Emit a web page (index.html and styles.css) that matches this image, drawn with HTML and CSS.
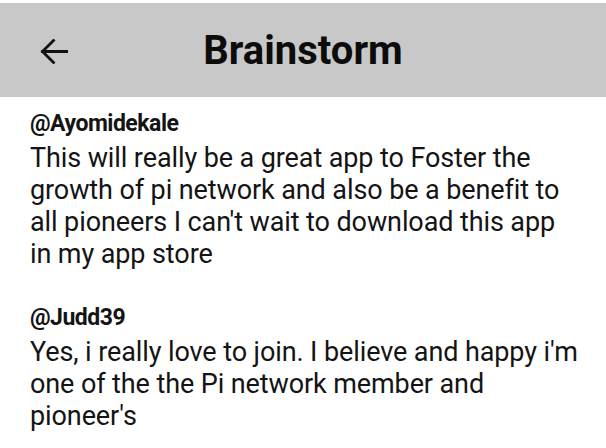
FILE: index.html
```html
<!DOCTYPE html>
<html>
<head>
<meta charset="utf-8">
<link rel="stylesheet" href="styles.css">
</head>
<body>
<header class="topbar">
  <div class="back">
    <svg width="28" height="25" viewBox="0 0 28 25" aria-hidden="true">
      <path d="M27 12.5H2.5M13.5 1.5L2.5 12.5L13.5 23.5" fill="none" stroke="#111" stroke-width="2.8" stroke-linecap="square"/>
    </svg>
  </div>
  <h1 class="title">Brainstorm</h1>
  <div></div>
</header>
<main class="comments">
  <section class="comment">
    <div class="user">@Ayomidekale</div>
    <p class="text">This will really be a great app to Foster the growth of pi network and also be a benefit to all pioneers I can't wait to download this app in my app store</p>
  </section>
  <section class="comment">
    <div class="user">@Judd39</div>
    <p class="text">Yes, i really love to join. I believe and happy i'm one of the the Pi network member and pioneer's</p>
  </section>
</main>
</body>
</html>
```
FILE: styles.css
```css
html, body {
  margin: 0;
  padding: 0;
  background: #fff;
}
body {
  font-family: Roboto, "Noto Sans", sans-serif;
  color: #141414;
  width: 606px;
  height: 448px;
  overflow: hidden;
}
.topbar {
  margin-top: 3px;
  height: 94px;
  background: #c8c8c8;
  display: grid;
  grid-template-columns: 1fr auto 1fr;
  align-items: center;
}
.back {
  padding-left: 40px;
  display: flex;
  align-items: center;
  padding-top: 2px;
}
.back svg { display: block; }
.title {
  margin: 0;
  font-size: 40px;
  font-weight: 700;
  color: #0c0c0c;
  line-height: 47px;
}
.comments {
  padding: 11px 26px 0 30px;
  display: flex;
  flex-direction: column;
  gap: 32px;
}
.comment {
  display: flex;
  flex-direction: column;
  gap: 2px;
}
.user {
  font-size: 23px;
  font-weight: 700;
  letter-spacing: -0.5px;
  line-height: 32px;
}
.text {
  margin: 0;
  font-size: 27px;
  letter-spacing: -0.1px;
  line-height: 32px;
}
```
